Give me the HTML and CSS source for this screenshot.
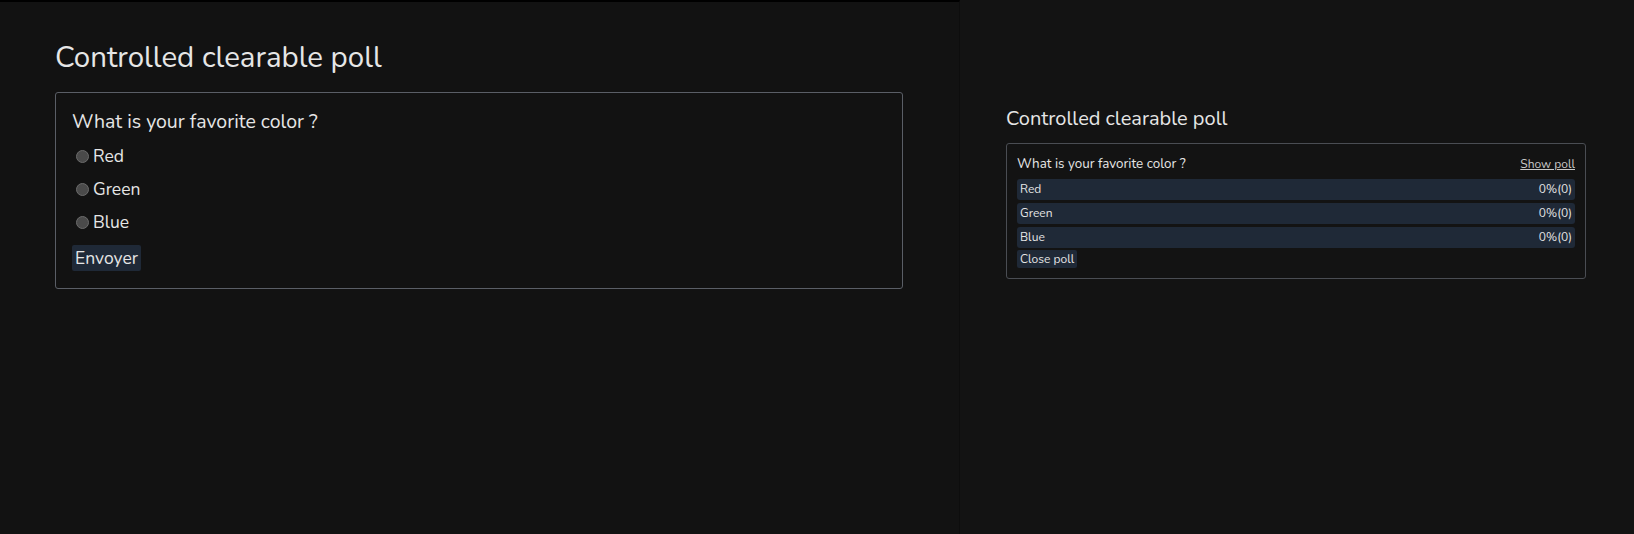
FILE: index.html
```html
<!DOCTYPE html>
<html>
<head>
<meta charset="utf-8">
<link rel="stylesheet" href="styles.css">
</head>
<body>
<div class="layout">
  <main class="main">
    <h1 class="title">Controlled clearable poll</h1>
    <form class="poll">
      <div class="question">What is your favorite color ?</div>
      <label class="option"><span class="radio"></span>Red</label>
      <label class="option"><span class="radio"></span>Green</label>
      <label class="option"><span class="radio"></span>Blue</label>
      <div class="actions"><button type="button" class="btn">Envoyer</button></div>
    </form>
  </main>
  <aside class="side">
    <h2 class="side-title">Controlled clearable poll</h2>
    <div class="result">
      <div class="result-head">
        <span class="result-q">What is your favorite color ?</span>
        <a class="show-link" href="#">Show poll</a>
      </div>
      <div class="bar"><span>Red</span><span>0%(0)</span></div>
      <div class="bar"><span>Green</span><span>0%(0)</span></div>
      <div class="bar"><span>Blue</span><span>0%(0)</span></div>
      <div class="actions actions-sm"><button type="button" class="btn btn-sm">Close poll</button></div>
    </div>
  </aside>
</div>
</body>
</html>
```
FILE: styles.css
```css
* { box-sizing: border-box; }
html, body { margin: 0; padding: 0; height: 100%; }
body {
  background: #131313;
  color: #e6e6e6;
  font-family: "Nunito", "Lato", "Open Sans", sans-serif;
}
.layout { display: flex; height: 534px; }
.main {
  width: 960px;
  background: #121212;
  border-top: 2px solid #000;
  border-right: 1px solid #0d0d0d;
  padding: 34px 56px 0 55px;
}
.title {
  margin: 0 0 14px;
  font-size: 29.5px;
  font-weight: 400;
  line-height: 42px;
}
.poll {
  border: 1px solid #5a5e66;
  border-radius: 3px;
  padding: 15px 16px 17px;
}
.question { font-size: 19.5px; line-height: 28px; margin-bottom: 8px; }
.option {
  display: flex;
  align-items: center;
  font-size: 17.5px;
  line-height: 25px;
  margin-bottom: 8px;
  padding-left: 4px;
}
.radio {
  width: 13px; height: 13px;
  border-radius: 50%;
  background: #4a4a4a;
  border: 1px solid #6b6b6b;
  margin-right: 4px;
}
.actions { display: flex; margin-top: 10px; }
.btn {
  font-family: inherit;
  background: #1f2937;
  color: #e6e6e6;
  border: none;
  border-radius: 2px;
  font-size: 17.5px;
  height: 26px;
  line-height: 26px;
  padding: 0 3px;
}
.side {
  flex: 1;
  padding: 104px 48px 0 46px;
}
.side-title {
  margin: 0 0 9px;
  font-size: 20px;
  font-weight: 400;
  line-height: 30px;
}
.result {
  border: 1px solid #4a4d53;
  border-radius: 3px;
  padding: 11px 10px 10px;
}
.result-head {
  display: flex;
  justify-content: space-between;
  align-items: baseline;
  font-size: 13.4px;
  line-height: 18px;
  margin-bottom: 6px;
}
.show-link { color: #c8c8c8; font-size: 12px; text-decoration: underline; }
.bar {
  display: flex;
  justify-content: space-between;
  background: #1f2937;
  border-radius: 3px;
  font-size: 12px;
  height: 21px;
  line-height: 21px;
  padding: 0 3px;
  margin-bottom: 3px;
}
.actions-sm { margin-top: -1px; }
.btn-sm { font-size: 12px; height: 18px; line-height: 18px; padding: 0 3px; }
```
